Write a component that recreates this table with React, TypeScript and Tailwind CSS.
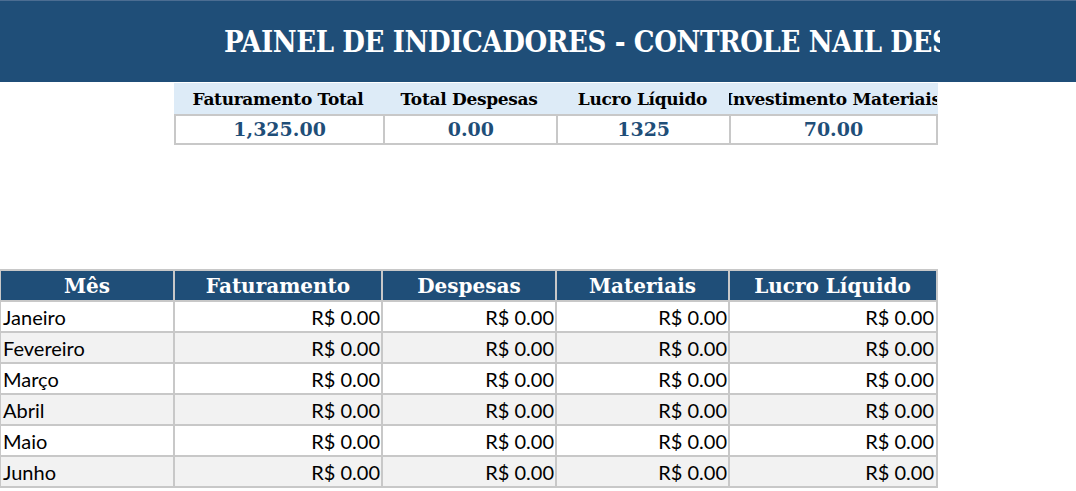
import React from "react";

const serif = { fontFamily: '"DejaVu Serif", "Liberation Serif", serif' };
const serifCond = { fontFamily: '"DejaVu Serif Condensed", "DejaVu Serif", "Liberation Serif", serif' };
const sans = { fontFamily: 'Lato, "Liberation Sans", sans-serif' };

const cols = ["w-[172px]", "w-[208px]", "w-[174px]", "w-[173px]", "w-[207px]"];
const heads = ["Mês", "Faturamento", "Despesas", "Materiais", "Lucro Líquido"];
const months = ["Janeiro", "Fevereiro", "Março", "Abril", "Maio", "Junho"];

const kpiCols = ["w-[208px]", "w-[174px]", "w-[173px]", "w-[208px]"];
const kpiHeads = ["Faturamento Total", "Total Despesas", "Lucro Líquido", "Investimento Materiais"];
const kpiVals = ["1,325.00", "0.00", "1325", "70.00"];

export default function App() {
  return (
    <div className="w-[1076px] h-[491px] bg-white overflow-hidden relative">
      <div className="h-[82px] bg-[#1f4e78] border-t border-[#4b6d92] w-full">
        <div className="w-[940px] overflow-hidden h-full">
          <div
            className="pl-[224px] pt-[23px] text-white font-bold text-[29px] whitespace-nowrap leading-[36px] tracking-[-0.4px] [font-stretch:condensed]"
            style={serifCond}
          >
            PAINEL DE INDICADORES - CONTROLE NAIL DESPESAS
          </div>
        </div>
      </div>
      <div className="ml-[174px] mt-[1px] w-[764px]">
        <div className="flex h-[31px] bg-[#ddebf7]">
          {kpiHeads.map((h, i) => (
            <div
              key={h}
              className={`${kpiCols[i]} flex items-center justify-center overflow-hidden whitespace-nowrap text-[17px] font-bold text-black pt-[2px] tracking-[-0.3px]`}
              style={serif}
            >
              {h}
            </div>
          ))}
        </div>
        <div className="flex h-[31px] border-2 border-[#c8c8c8] bg-white">
          {kpiVals.map((v, i) => (
            <div
              key={i}
              className={`${kpiCols[i]} flex items-center justify-center text-[19px] font-bold text-[#1f4e78] ${i > 0 ? "border-l-2 border-[#c8c8c8]" : ""}`}
              style={serif}
            >
              {v}
            </div>
          ))}
        </div>
      </div>
      <div className="mt-[124px] w-[938px] border-t-2 border-x border-x-[#c8c8c8] border-r-2 border-t-[#c8c8c8]">
        <div className="flex h-[31px] bg-[#1f4e78] border-b-2 border-[#c8c8c8]">
          {heads.map((h, i) => (
            <div
              key={h}
              className={`${cols[i]} flex items-center justify-center text-white font-bold text-[20px] ${i > 0 ? "border-l-2 border-[#c8c8c8]" : ""}`}
              style={serif}
            >
              {h}
            </div>
          ))}
        </div>
        {months.map((m, r) => (
          <div
            key={m}
            className={`flex h-[31px] border-b-2 border-[#c8c8c8] ${r % 2 === 1 ? "bg-[#f2f2f2]" : "bg-white"}`}
            style={sans}
          >
            {cols.map((c, i) => (
              <div
                key={i}
                className={`${c} flex items-center text-[20px] text-black ${i === 0 ? "justify-start pl-[2px]" : "justify-end pr-[1px] border-l-2 border-[#c8c8c8]"}`}
              >
                {i === 0 ? m : "R$ 0.00"}
              </div>
            ))}
          </div>
        ))}
      </div>
    </div>
  );
}
